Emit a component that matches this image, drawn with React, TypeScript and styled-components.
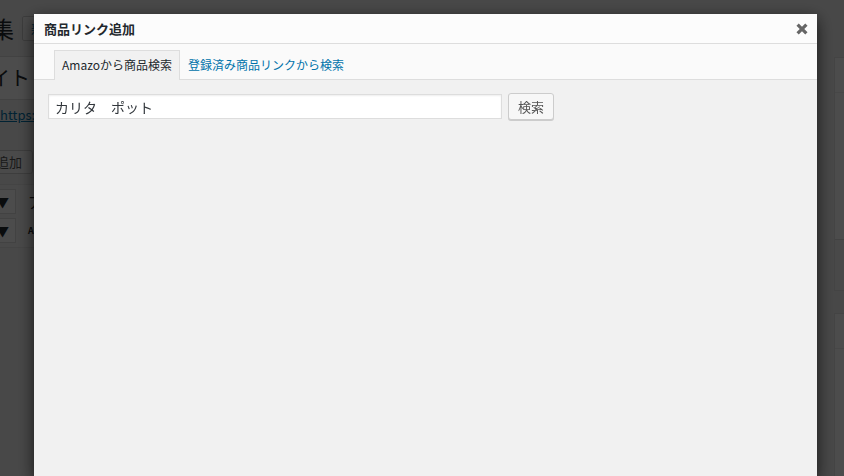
import React from "react";
import styled, { createGlobalStyle } from "styled-components";

const GlobalStyle = createGlobalStyle`
  html, body {
    margin: 0;
    padding: 0;
    height: 100%;
    overflow: hidden;
  }
  body {
    background: #f1f1f1;
    font-family: "Noto Sans CJK JP", "Noto Sans", sans-serif;
    color: #23282d;
  }
  * { box-sizing: border-box; }
`;

/* ---------- background: post editor behind the modal ---------- */

const Page = styled.div`
  display: grid;
  grid-template-columns: 915px 280px;
  column-gap: 20px;
  margin-left: -101px;
  height: 100vh;
  overflow: hidden;
`;

const Main = styled.div`
  display: flex;
  flex-direction: column;
  padding-top: 13px;
`;

const TitleRow = styled.div`
  display: flex;
  align-items: center;
  height: 30px;
`;

const PageTitle = styled.h1`
  margin: 0;
  font-size: 23px;
  font-weight: 400;
  line-height: 30px;
`;

const AddNew = styled.span`
  margin-left: 8px;
  height: 25px;
  padding: 0 8px;
  border: 1px solid #ccc;
  border-radius: 2px;
  background: #f7f7f7;
  color: #0073aa;
  font-size: 13px;
  line-height: 23px;
`;

const TitleField = styled.div`
  margin-top: 13px;
  height: 44px;
  padding: 0 10px;
  border: 1px solid #ddd;
  background: #fff;
  font-size: 20px;
  line-height: 42px;
`;

const Permalink = styled.div`
  margin-top: 8px;
  padding-left: 101px;
  font-size: 13px;
  line-height: 14px;
  color: #0073aa;
  text-decoration: underline;
`;

const MediaButton = styled.span`
  align-self: flex-start;
  margin-top: 28px;
  height: 24px;
  padding: 0 10px 0 32px;
  border: 1px solid #ccc;
  border-radius: 3px;
  background: #f7f7f7;
  font-size: 13px;
  line-height: 22px;
  color: #555;
`;

const Toolbar = styled.div`
  margin-top: 10px;
  padding: 4px;
  border: 1px solid #e5e5e5;
  background: #f5f5f5;
  display: flex;
  flex-direction: column;
  gap: 4px;
`;

const ToolRow = styled.div`
  display: flex;
  align-items: center;
  gap: 12px;
`;

const Select = styled.div`
  width: 112px;
  height: 25px;
  border: 1px solid #ddd;
  background: #fff;
  display: flex;
  align-items: center;
  justify-content: space-between;
  padding: 0 6px;
  font-size: 13px;
`;

const ToolGlyph = styled.span<{ $small?: boolean }>`
  font-size: ${(p) => (p.$small ? "9px" : "15px")};
  font-weight: ${(p) => (p.$small ? 700 : 400)};
`;

const Sidebar = styled.div`
  display: flex;
  flex-direction: column;
  gap: 22px;
  padding-top: 57px;
`;

const Box = styled.div`
  border: 1px solid #e5e5e5;
  background: #fff;
`;

const BoxHead = styled.div`
  height: 35px;
  border-bottom: 1px solid #eee;
  padding: 0 12px;
  font-size: 14px;
  line-height: 35px;
  font-weight: 600;
`;

const BoxBody = styled.div<{ $h: number }>`
  height: ${(p) => p.$h}px;
`;

const BoxFoot = styled.div`
  height: 51px;
  border-top: 1px solid #ddd;
  background: #f5f5f5;
`;

const Overlay = styled.div`
  position: fixed;
  inset: 0;
  background: rgba(0, 0, 0, 0.7);
`;

/* ---------- modal ---------- */

const Modal = styled.div`
  position: fixed;
  top: 14px;
  left: 34px;
  right: 27px;
  bottom: 0;
  display: flex;
  flex-direction: column;
  background: #f1f1f1;
  box-shadow: 0 5px 15px rgba(0, 0, 0, 0.7);
`;

const ModalHeader = styled.div`
  display: flex;
  align-items: center;
  justify-content: space-between;
  height: 30px;
  padding: 0 9px 0 10px;
  background: #fcfcfc;
  border-bottom: 1px solid #ddd;
`;

const ModalTitle = styled.h1`
  margin: 0;
  font-size: 13px;
  font-weight: 700;
  line-height: 29px;
  color: #23282d;
`;

const CloseButton = styled.span`
  display: flex;
  width: 12px;
  height: 12px;
  color: #666;
  cursor: pointer;
`;

const TabBar = styled.div`
  display: flex;
  align-items: flex-end;
  height: 36px;
  padding: 0 20px;
  background: #fafafa;
  border-bottom: 1px solid #ddd;
`;

const Tab = styled.div<{ $active?: boolean }>`
  height: 30px;
  margin-bottom: -1px;
  padding: 0 7px;
  border: 1px solid ${(p) => (p.$active ? "#ddd" : "transparent")};
  border-bottom: none;
  background: ${(p) => (p.$active ? "#f1f1f1" : "transparent")};
  color: ${(p) => (p.$active ? "#23282d" : "#0073aa")};
  font-size: 12px;
  line-height: 28px;
  cursor: pointer;
`;

const SearchPane = styled.div`
  display: flex;
  align-items: center;
  gap: 6px;
  padding: 13px 14px;
`;

const SearchInput = styled.input`
  width: 454px;
  height: 25px;
  padding: 0 6px;
  border: 1px solid #ddd;
  background: #fff;
  box-shadow: inset 0 1px 2px rgba(0, 0, 0, 0.07);
  font-family: "Noto Sans CJK JP", "Noto Sans", sans-serif;
  font-size: 14px;
  color: #32373c;
  outline: none;
`;

const SearchButton = styled.button`
  height: 27px;
  padding: 0 9px;
  border: 1px solid #ccc;
  border-radius: 3px;
  background: #f7f7f7;
  box-shadow: 0 1px 0 #ccc;
  font-family: "Noto Sans CJK JP", "Noto Sans", sans-serif;
  font-size: 13px;
  line-height: 25px;
  color: #555;
  cursor: pointer;
`;

const CloseIcon = () => (
  <svg width="12" height="12" viewBox="0 0 12 12">
    <path
      d="M1.6 1.6 L10.4 10.4 M10.4 1.6 L1.6 10.4"
      stroke="currentColor"
      strokeWidth="3.2"
      strokeLinecap="butt"
    />
  </svg>
);

export default function App() {
  return (
    <>
      <GlobalStyle />
      <Page>
        <Main>
          <TitleRow>
            <PageTitle>投稿を編集</PageTitle>
            <AddNew>新規追加</AddNew>
          </TitleRow>
          <TitleField>ブログサイト</TitleField>
          <Permalink>https://example.com/</Permalink>
          <MediaButton>メディアを追加</MediaButton>
          <Toolbar>
            <ToolRow>
              <Select>
                段落<span>▼</span>
              </Select>
              <ToolGlyph>ア</ToolGlyph>
            </ToolRow>
            <ToolRow>
              <Select>
                フォント<span>▼</span>
              </Select>
              <ToolGlyph $small>Ab</ToolGlyph>
            </ToolRow>
          </Toolbar>
        </Main>
        <Sidebar>
          <Box>
            <BoxHead>公開</BoxHead>
            <BoxBody $h={146} />
            <BoxFoot />
          </Box>
          <Box>
            <BoxHead>フォーマット</BoxHead>
            <BoxBody $h={200} />
          </Box>
        </Sidebar>
      </Page>
      <Overlay />
      <Modal>
        <ModalHeader>
          <ModalTitle>商品リンク追加</ModalTitle>
          <CloseButton>
            <CloseIcon />
          </CloseButton>
        </ModalHeader>
        <TabBar>
          <Tab $active>Amazoから商品検索</Tab>
          <Tab>登録済み商品リンクから検索</Tab>
        </TabBar>
        <SearchPane>
          <SearchInput defaultValue="カリタ　ポット" />
          <SearchButton>検索</SearchButton>
        </SearchPane>
      </Modal>
    </>
  );
}
